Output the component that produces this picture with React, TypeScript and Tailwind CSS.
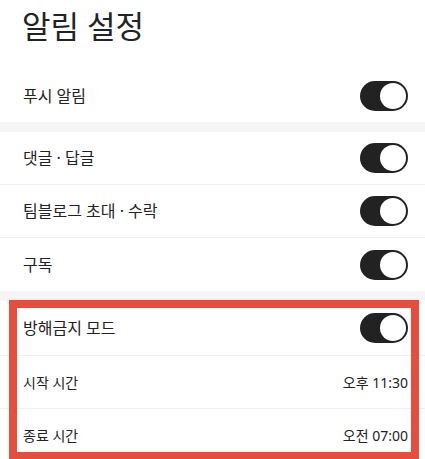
const FONT = "font-['Noto_Sans','Noto_Sans_CJK_KR',sans-serif]";

function Toggle() {
  return (
    <div className="flex h-[30px] w-[48px] items-center justify-end rounded-full bg-[#222222] p-[2px]">
      <div className="h-[26px] w-[26px] rounded-full bg-white" />
    </div>
  );
}

function ToggleRow({ label, divider }: { label: string; divider?: boolean }) {
  return (
    <div
      className={`flex h-[53px] items-center justify-between pr-[17px] pl-[23px] ${
        divider ? 'border-[#f0f0f0] border-b' : ''
      }`}
    >
      <span className="text-[#222222] text-[16px]">{label}</span>
      <Toggle />
    </div>
  );
}

function TimeRow({ label, value, divider }: { label: string; value: string; divider?: boolean }) {
  return (
    <div
      className={`flex h-[53px] items-center justify-between pr-[17px] pl-[23px] ${
        divider ? 'border-[#f0f0f0] border-b' : ''
      }`}
    >
      <span className="text-[#222222] text-[14px]">{label}</span>
      <span className="text-[#222222] text-[14px]">{value}</span>
    </div>
  );
}

export default function App() {
  return (
    <div className={`relative h-[459px] w-[425px] overflow-hidden bg-white ${FONT}`}>
      <h1 className="flex h-[69px] items-start px-[22px] pt-[5px] font-normal text-[#222222] text-[31px] leading-[42px]">
        알림 설정
      </h1>

      <ToggleRow label="푸시 알림" />
      <div className="h-[10px] bg-[#f5f5f5]" />

      <ToggleRow divider label="댓글 · 답글" />
      <ToggleRow divider label="팀블로그 초대 · 수락" />
      <ToggleRow label="구독" />
      <div className="h-[10px] bg-[#f5f5f5]" />

      <div className="flex h-[55px] items-center justify-between border-[#f0f0f0] border-b pr-[17px] pl-[23px]">
        <span className="text-[#222222] text-[16px]">방해금지 모드</span>
        <Toggle />
      </div>
      <TimeRow divider label="시작 시간" value="오후 11:30" />
      <TimeRow label="종료 시간" value="오전 07:00" />

      {/* annotation frame over the do-not-disturb section */}
      <div className="pointer-events-none absolute top-[300px] left-[9px] h-[160px] w-[410px] border-[#e84c3d] border-[8px]" />
    </div>
  );
}
